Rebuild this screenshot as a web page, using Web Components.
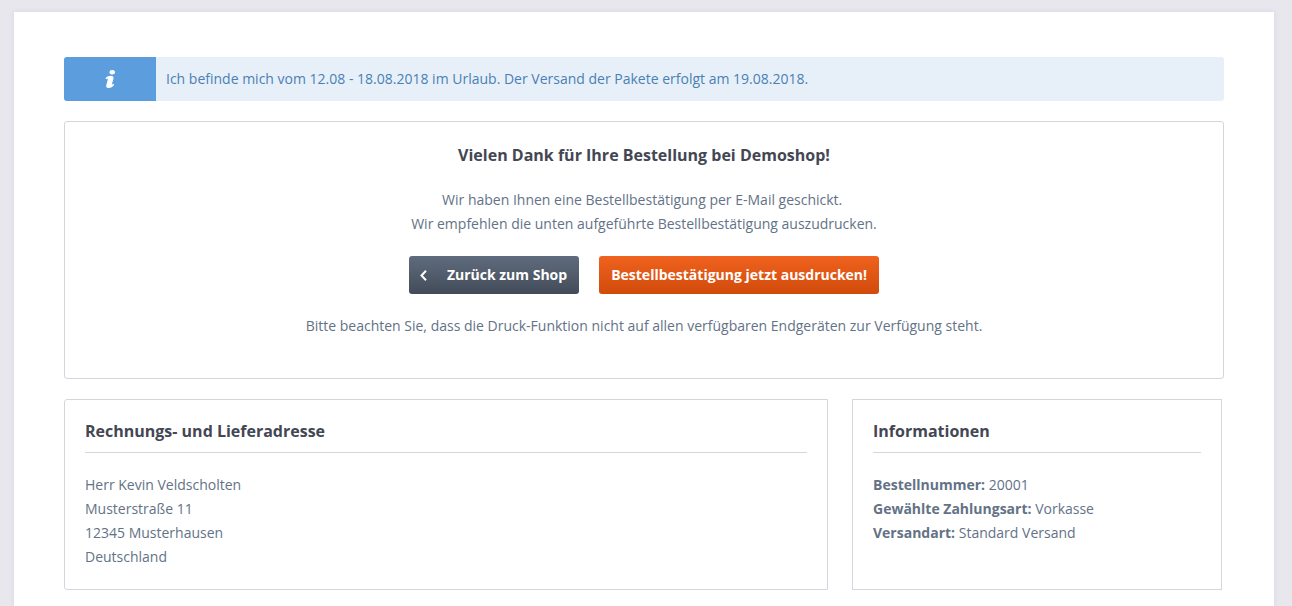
<!DOCTYPE html>
<html lang="de">
<head>
<meta charset="utf-8">
<meta name="viewport" content="width=device-width, initial-scale=1">
<title>Vielen Dank für Ihre Bestellung</title>
<style>
  :root {
    --line: #d3d6dc;
    --heading: #434753;
    --text: #637286;
  }
  body {
    margin: 0;
    background: #e8e7ee;
    color: var(--text);
    font: 14px/24px "Open Sans", "Noto Sans", sans-serif;
  }
</style>
</head>
<body>
<shop-page>
  <shop-alert>Ich befinde mich vom 12.08 - 18.08.2018 im Urlaub. Der Versand der Pakete erfolgt am 19.08.2018.</shop-alert>
  <finish-teaser>
    <span slot="title">Vielen Dank für Ihre Bestellung bei Demoshop!</span>
    <span>Wir haben Ihnen eine Bestellbestätigung per E-Mail geschickt.&nbsp;<br>Wir empfehlen die unten aufgeführte Bestellbestätigung auszudrucken.</span>
    <shop-button slot="actions" href="#shop" icon="back">Zurück zum Shop</shop-button>
    <shop-button slot="actions" variant="primary">Bestellbestätigung jetzt ausdrucken!</shop-button>
    <span slot="note">Bitte beachten Sie, dass die Druck-Funktion nicht auf allen verfügbaren Endgeräten zur Verfügung steht.</span>
  </finish-teaser>
  <panel-row>
    <info-panel class="address">
      <span slot="title">Rechnungs- und Lieferadresse</span>
      Herr Kevin Veldscholten<br>Musterstraße 11<br>12345 Musterhausen<br>Deutschland
    </info-panel>
    <info-panel class="details">
      <span slot="title">Informationen</span>
      <b>Bestellnummer:</b> 20001<br><b>Gewählte Zahlungsart:</b> Vorkasse<br><b>Versandart:</b> Standard Versand
    </info-panel>
  </panel-row>
</shop-page>

<script>
  const define = (name, html, setup) => customElements.define(name, class extends HTMLElement {
    connectedCallback() {
      if (this.shadowRoot) return;
      this.attachShadow({ mode: "open" }).innerHTML = html;
      if (setup) setup(this, this.shadowRoot);
    }
  });

  define("shop-page", `
    <style>
      :host { display: block; padding: 12px 18px 0 14px; }
      main {
        box-sizing: border-box; max-width: 1260px; min-height: calc(100vh - 12px);
        margin: 0 auto; padding: 45px 50px 16px; background: #fff;
        box-shadow: 0 0 4px 1px #dcdbe3;
        display: flex; flex-direction: column; gap: 20px;
      }
    </style>
    <main><slot></slot></main>`);

  define("shop-alert", `
    <style>
      :host { display: flex; min-height: 44px; border-radius: 3px; overflow: hidden; background: #e7f0f8; color: #4a80b5; }
      .icon { flex: 0 0 92px; display: flex; align-items: center; justify-content: center; background: #5c9ddd; }
      .text { padding: 10px; }
    </style>
    <div class="icon">
      <svg width="10" height="18" viewBox="0 0 10 18" fill="#fff" aria-hidden="true">
        <ellipse cx="7.200" cy="2.200" rx="2.700" ry="2.200"/>
        <path d="M.5 8.200C2 6.500 3.800 5.800 5.700 5.800c2.300 0 3.200 1.200 2.700 3.200L7.100 13.400c-.3 1.200.2 1.400 1.500.4l.6.9C7.700 16.900 5.700 18 3.800 18 1.700 18 .8 16.800 1.300 14.900L2.700 10c.3-1.200-.2-1.500-1.600-.7Z"/>
      </svg>
    </div>
    <div class="text" role="status"><slot></slot></div>`);

  define("finish-teaser", `
    <style>
      :host { display: block; border: 1px solid var(--line); border-radius: 3px; padding: 20px 20px 40px; text-align: center; }
      h2 { margin: 0; font-size: 16px; line-height: 26px; color: var(--heading); font-weight: 700; }
      p { margin: 20px 0; }
      .last { margin-bottom: 0; }
      .actions { display: flex; flex-wrap: wrap; justify-content: center; gap: 20px; }
    </style>
    <h2><slot name="title"></slot></h2>
    <p><slot></slot></p>
    <div class="actions"><slot name="actions"></slot></div>
    <p class="last"><slot name="note"></slot></p>`);

  define("shop-button", `
    <style>
      :host { display: block; }
      .btn {
        box-sizing: border-box; display: flex; align-items: center; justify-content: space-between; gap: 20px;
        height: 38px; margin: 0; padding: 0 12px; border: 0; border-radius: 3px;
        background: linear-gradient(#5f6c7e, #434b58); color: #fff;
        font: inherit; font-weight: 700; line-height: 38px; text-decoration: none; cursor: pointer;
      }
      a.btn { padding-left: 11px; }
      .primary { background: linear-gradient(#f0621f, #d14b0b); }
    </style>`, (host, root) => {
      const href = host.getAttribute("href");
      const el = document.createElement(href ? "a" : "button");
      if (href) el.href = href; else el.type = "button";
      el.className = "btn " + (host.getAttribute("variant") || "");
      const icon = host.getAttribute("icon") === "back"
        ? `<svg width="7" height="11" viewBox="0 0 7 11" fill="none" stroke="#fff" stroke-width="2" aria-hidden="true"><path d="M6 .8 1.500 5.500 6 10.200"/></svg>`
        : "";
      el.innerHTML = icon + "<span><slot></slot></span>";
      root.append(el);
    });

  define("panel-row", `
    <style>
      :host { display: grid; grid-template-columns: minmax(0, 764fr) minmax(0, 370fr); gap: 24px; margin-right: 2px; }
      @media (max-width: 720px) { :host { grid-template-columns: minmax(0, 1fr); } }
      ::slotted(.address) { border-radius: 3px 0 0 3px; }
    </style>
    <slot></slot>`);

  define("info-panel", `
    <style>
      :host { display: block; border: 1px solid var(--line); padding: 20px; }
      h2 { margin: 0 0 20px; padding-bottom: 10px; border-bottom: 1px solid var(--line); font-size: 16px; line-height: 22px; color: var(--heading); font-weight: 700; }
    </style>
    <h2><slot name="title"></slot></h2>
    <div><slot></slot></div>`);
</script>
</body>
</html>
